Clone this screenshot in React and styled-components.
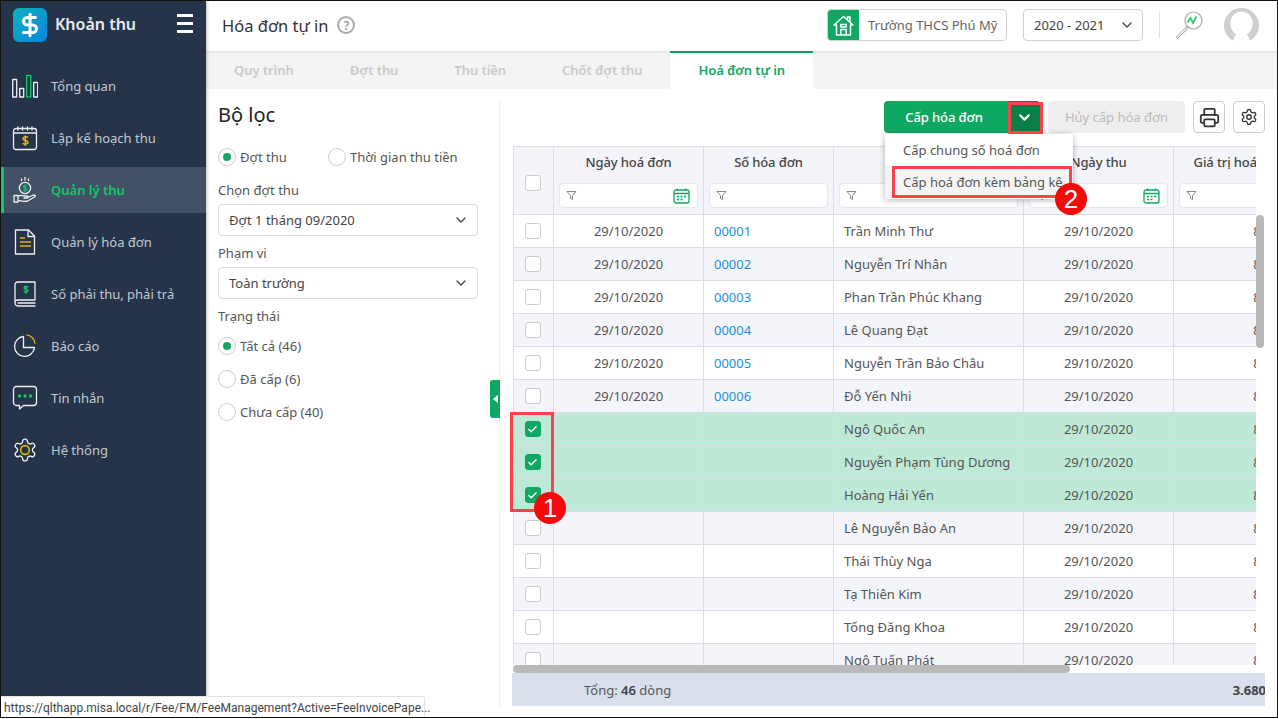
import React from 'react'
import styled, { createGlobalStyle } from 'styled-components'
import { ChevronDown, DollarSign, Printer, Settings, Check } from 'lucide-react'

const GlobalStyle = createGlobalStyle`
html, body {
    margin: 0;
    padding: 0;
    background: #fff;
    overflow: hidden;
}
* { box-sizing: border-box; }
body {
    font-family: "Noto Sans", "Open Sans", sans-serif;
    font-size: 13px;
    color: #555;
}
`

const Frame = styled.div`
position: relative;
display: flex;
width: 1278px;
height: 718px;
border: 1px solid #111;
overflow: hidden;
`

const Sidebar = styled.aside`
width: 205px;
flex: none;
background: #253449;
box-shadow: 1px 0 3px rgba(0,0,0,.25);
z-index: 2;
`
const Brand = styled.div`
display: flex;
align-items: center;
height: 50px;
padding: 0 0 2px 12px;
border-bottom: 1px solid #222f42;
`
const Logo = styled.div`
display: flex;
align-items: center;
justify-content: center;
width: 34px;
height: 34px;
border-radius: 6px;
background: linear-gradient(135deg, #0ab3b8, #0b84e0);
color: #fff;
`
const BrandName = styled.div`
margin: 0 0 2px 8px;
width: 122px;
color: #e8eaee;
font-size: 16px;
font-weight: 600;
`
const Burger = styled.div`
display: flex;
flex-direction: column;
gap: 5px;
width: 16px;
margin-bottom: 2px;
span {
    display: block;
    height: 3px;
    background: #fff;
}
`
const Menu = styled.nav`
display: flex;
flex-direction: column;
gap: 6px;
padding-top: 12px;
`
const MenuItem = styled.div`
display: flex;
align-items: center;
gap: 13px;
height: 46px;
padding-left: 11px;
font-size: 13px;
color: ${p => (p.$active ? '#12c86c' : '#c4c8cf')};
font-weight: ${p => (p.$active ? 600 : 400)};
background: ${p => (p.$active ? '#435166' : 'transparent')};
box-shadow: ${p => (p.$active ? 'inset 3px 0 0 #12c86c' : 'none')};
`

const Main = styled.main`
flex: 1;
min-width: 0;
display: flex;
flex-direction: column;
`
const Header = styled.header`
display: flex;
align-items: center;
height: 50px;
flex: none;
padding: 0 0 2px 16px;
background: #fff;
box-shadow: 0 1px 3px rgba(0,0,0,.1);
z-index: 1;
`
const PageTitle = styled.h1`
margin: 0;
font-size: 16.5px;
font-weight: 400;
color: #333;
`
const HelpMark = styled.div`
display: flex;
align-items: center;
justify-content: center;
width: 18px;
height: 18px;
margin-left: 9px;
border: 2px solid #aaa;
border-radius: 50%;
color: #999;
font-size: 12px;
font-weight: 600;
`
const SchoolBox = styled.div`
display: flex;
align-items: center;
width: 180px;
height: 32px;
margin-left: auto;
border: 1px solid #d0d0d0;
border-radius: 4px;
overflow: hidden;
color: #666;
`
const SchoolIcon = styled.div`
display: flex;
align-items: center;
justify-content: center;
width: 31px;
height: 100%;
margin-right: 9px;
background: #0fa863;
`
const YearBox = styled.div`
display: flex;
align-items: center;
justify-content: space-between;
width: 120px;
height: 32px;
margin-left: 16px;
padding: 0 7px 0 10px;
border: 1px solid #d0d0d0;
border-radius: 4px;
color: #444;
`
const HeaderRule = styled.div`
width: 1px;
height: 26px;
margin-left: 16px;
background: #e2e2e2;
`
const SearchSlot = styled.div`
display: flex;
margin-left: 15px;
`
const Avatar = styled.div`
display: flex;
width: 35px;
height: 35px;
margin: 0 18px 0 21px;
`

const TabBar = styled.div`
display: flex;
height: 38px;
flex: none;
background: #f4f4f4;
`
const Tab = styled.div`
display: flex;
align-items: center;
padding: 0 28px;
font-weight: 600;
font-size: 13px;
letter-spacing: -0.06px;
color: ${p => (p.$active ? '#0fa863' : '#c9c9c9')};
background: ${p => (p.$active ? '#fff' : 'transparent')};
box-shadow: ${p => (p.$active ? 'inset 0 2px 0 #0fa863' : 'none')};
`

const Body = styled.div`
position: relative;
flex: 1;
min-height: 0;
display: flex;
padding: 11px 12px 10px 0;
`
const FilterPanel = styled.section`
position: relative;
width: 294px;
flex: none;
padding: 0 21px 0 12px;
border-right: 1px solid #eee;
`
const FilterTitle = styled.h2`
margin: 0 0 17px;
height: 30px;
line-height: 30px;
font-size: 20px;
font-weight: 400;
color: #222;
`
const RadioRow = styled.div`
display: flex;
height: 20px;
margin-bottom: ${p => p.$gap || 0}px;
`
const RadioLabel = styled.label`
display: flex;
align-items: center;
gap: 4px;
width: ${p => (p.$width ? `${p.$width}px` : 'auto')};
color: #555;
`
const RadioDot = styled.span`
display: flex;
align-items: center;
justify-content: center;
width: 18px;
height: 18px;
border: 1px solid #ccc;
border-radius: 50%;
&::after {
    content: '';
    display: ${p => (p.$on ? 'block' : 'none')};
    width: 8px;
    height: 8px;
    border-radius: 50%;
    background: #0fa863;
}
`
const FieldLabel = styled.div`
height: 18px;
line-height: 18px;
margin-bottom: ${p => p.$gap || 5}px;
color: #555;
`
const SelectBox = styled.div`
display: flex;
align-items: center;
justify-content: space-between;
height: 32px;
margin-bottom: 8px;
padding: 0 8px 0 10px;
border: 1px solid #ddd;
border-radius: 4px;
color: #444;
`
const Collapse = styled.div`
position: absolute;
top: 280px;
right: -1px;
display: flex;
align-items: center;
justify-content: center;
width: 10px;
height: 38px;
background: #0fa863;
border-radius: 3px 0 0 3px;
&::after {
    content: '';
    border: 4px solid transparent;
    border-right: 5px solid #fff;
    border-left: 0;
}
`

const Content = styled.section`
position: relative;
flex: 1;
min-width: 0;
display: flex;
flex-direction: column;
padding-left: 13px;
`
const Toolbar = styled.div`
display: flex;
justify-content: flex-end;
gap: 8px;
height: 32px;
flex: none;
margin: 1px 0 13px;
`
const SplitButton = styled.div`
display: flex;
width: 156px;
border-radius: 4px;
overflow: hidden;
background: #0fa863;
color: #fff;
font-weight: 500;
letter-spacing: -0.1px;
`
const SplitLabel = styled.div`
display: flex;
align-items: center;
justify-content: center;
width: 120px;
margin-right: 4px;
`
const SplitArrow = styled.div`
display: flex;
align-items: center;
justify-content: center;
flex: 1;
background: #0b7f48;
`
const GhostButton = styled.div`
display: flex;
align-items: center;
justify-content: center;
width: 137px;
border-radius: 4px;
background: #eeeeee;
color: #bbb;
`
const IconButton = styled.div`
display: flex;
align-items: center;
justify-content: center;
width: 32px;
border: 1px solid #ccc;
border-radius: 4px;
color: #333;
`

const GridArea = styled.div`
position: relative;
flex: none;
height: 527px;
padding: 0 9px 8px 0;
`
const GridClip = styled.div`
height: 100%;
overflow: hidden;
border-left: 1px solid #dcdce8;
border-top: 1px solid #dcdce8;
`
const Row = styled.div`
display: flex;
width: 800px;
height: ${p => p.$height}px;
background: ${p => (p.$selected ? '#bfe9d7' : p.$odd ? '#f4f5fa' : '#fff')};
`
const Cell = styled.div`
display: flex;
align-items: center;
justify-content: ${p => p.$align || 'flex-start'};
flex: none;
width: ${p => p.$w}px;
padding: ${p => (p.$align === 'center' ? '0' : '0 10px')};
border-right: 1px solid #dcdce8;
border-bottom: 1px solid #dcdce8;
white-space: nowrap;
color: #555;
`
const CheckCell = styled(Cell)`
padding: ${p => (p.$head ? '5px 2px 0 0' : '0 2px 0 0')};
`
const HeadCell = styled.div`
flex: none;
width: ${p => p.$w}px;
padding: 6px 5px 0;
border-right: 1px solid #dcdce8;
border-bottom: 1px solid #dcdce8;
`
const HeadTitle = styled.div`
height: 18px;
line-height: 18px;
margin-bottom: 12px;
text-align: center;
font-weight: 500;
letter-spacing: -0.12px;
white-space: nowrap;
color: #444;
`
const FilterInput = styled.div`
display: flex;
align-items: center;
justify-content: space-between;
height: 25px;
padding: 0 7px 0 6px;
background: #fff;
border: 1px solid #e6e6ee;
border-radius: 4px;
`
const CheckBox = styled.div`
display: flex;
align-items: center;
justify-content: center;
width: 16px;
height: 16px;
border-radius: 3px;
border: 1px solid ${p => (p.$on ? '#0fa863' : '#ccc')};
background: ${p => (p.$on ? '#0fa863' : '#fff')};
color: #fff;
`
const LinkText = styled.span`
color: #1a90e0;
`
const VScroll = styled.div`
position: absolute;
top: 69px;
right: 1px;
width: 8px;
height: 133px;
border-radius: 4px;
background: #b9b9b9;
`
const HScroll = styled.div`
position: absolute;
left: 0;
bottom: 0;
width: 557px;
height: 8px;
border-radius: 4px;
background: #b9b9b9;
`
const TotalBar = styled.div`
display: flex;
align-items: center;
height: 33px;
flex: none;
margin-left: -1px;
padding-left: 72px;
background: #d9e0ec;
overflow: hidden;
white-space: nowrap;
color: #555;
b { font-weight: 600; color: #444; }
`
const TotalAmount = styled.b`
margin-left: auto;
margin-right: -27px;
font-weight: 700 !important;
`

const DropMenu = styled.div`
position: absolute;
top: 34px;
left: 385px;
width: 188px;
padding-bottom: 1px;
background: #fff;
border-radius: 3px;
box-shadow: 0 1px 6px rgba(0,0,0,.3);
z-index: 3;
`
const DropItem = styled.div`
display: flex;
align-items: center;
height: 32px;
padding-left: 18px;
color: #555;
background: ${p => (p.$hover ? '#f5f5f5' : '#fff')};
white-space: nowrap;
`
const RedBox = styled.div`
position: absolute;
left: ${p => p.$x}px;
top: ${p => p.$y}px;
width: ${p => p.$w}px;
height: ${p => p.$h}px;
border: 3px solid #f9434a;
z-index: 4;
pointer-events: none;
`
const Badge = styled.div`
position: absolute;
left: ${p => p.$x}px;
top: ${p => p.$y}px;
display: flex;
align-items: center;
justify-content: center;
width: 32px;
height: 32px;
border-radius: 50%;
background: #f40a0a;
color: #fff;
font-family: "Liberation Sans", sans-serif;
font-size: 26px;
z-index: 5;
`
const StatusLink = styled.div`
position: absolute;
left: 0;
bottom: 0;
width: 424px;
height: 21px;
padding-left: 3px;
line-height: 22px;
background: #fff;
border: 1px solid #e2e2e2;
border-left: 0;
border-bottom: 0;
border-radius: 0 3px 0 0;
font-family: Roboto, sans-serif;
font-size: 12px;
white-space: nowrap;
color: #444;
z-index: 6;
`

const COLS = [40, 150, 130, 190, 150, 131]
const NAMES = [
    'Trần Minh Thư', 'Nguyễn Trí Nhân', 'Phan Trần Phúc Khang', 'Lê Quang Đạt', 'Nguyễn Trần Bảo Châu',
    'Đỗ Yến Nhi', 'Ngô Quốc An', 'Nguyễn Phạm Tùng Dương', 'Hoàng Hải Yến', 'Lê Nguyễn Bảo An',
    'Thái Thùy Nga', 'Tạ Thiên Kim', 'Tống Đăng Khoa', 'Ngô Tuấn Phát',
]
const HEADS = ['Ngày hoá đơn', 'Số hóa đơn', '', 'Ngày thu', 'Giá trị hoá đơn']

const Funnel = () => (
    <svg width="11" height="11" viewBox="0 0 11 11" fill="none" stroke="#888" strokeWidth="1">
        <path d="M1 1.5h9L6.5 5.5v4l-2-1v-3z" />
    </svg>
)
const CalendarMini = () => (
    <svg width="17" height="16" viewBox="0 0 17 16" fill="none" stroke="#0fa863" strokeWidth="1.3">
        <rect x="1" y="2" width="15" height="13" rx="2" />
        <path d="M1 5.5h15M4.5 .5v2M12.5 .5v2" />
        <path d="M4 8.5h2M7.5 8.5h2M11 8.5h2M4 11.5h2M7.5 11.5h2" strokeWidth="1.6" />
    </svg>
)

const stroke = { fill: 'none', stroke: '#eef0f3', strokeWidth: 1.3, strokeLinejoin: 'round', strokeLinecap: 'round' }
const IconChart = () => (
    <svg width="26" height="26" viewBox="0 0 26 26">
        <g {...stroke}>
            <rect x="0.7" y="6.5" width="4" height="17.500" />
            <rect x="7.7" y="15.500" width="4" height="8.500" />
            <rect x="21.7" y="9.500" width="4" height="14.500" />
        </g>
        <rect x="14.7" y="2.500" width="4" height="21.500" fill="none" stroke="#12c86c" strokeWidth="1.3" />
    </svg>
)
const IconPlan = () => (
    <svg width="26" height="26" viewBox="0 -1 26 26">
        <g {...stroke}>
            <rect x="1.5" y="2.5" width="23" height="21" rx="2.5" />
            <path d="M1.5 7h23M6 .8v3.4M10.5 .8v3.4M15.500 .8v3.4M20 .8v3.4" />
        </g>
        <path d="M16 11.500c-1-1-5-1-5 1.200s5 1.300 5 3.600-4.200 2.200-5.300 1M13.300 9.500v10.500" fill="none" stroke="#e8b10c" strokeWidth="1.5" />
    </svg>
)
const IconHand = () => (
    <svg width="26" height="26" viewBox="0 0 26 26">
        <g {...stroke}>
            <circle cx="13" cy="11" r="5.600" />
            <path d="M13 .5v2.500M9.500 2v1.500M16.500 2v1.500" />
            <path d="M2 18.500h4v6.500H2zM6 19.500c2.500-1.500 4-1.500 6-.5h3c1.500 0 1.500 2 0 2h-3M15.500 20.500l6-2.500c1.800-.5 2.500 1 1 2l-6.500 3.800c-3 1.200-7 .2-10-.3" />
        </g>
        <path d="M15 9c-.7-.7-3.800-.7-3.800.8s3.800.9 3.800 2.600-3.200 1.500-4 .7M13 7.500v7.500" fill="none" stroke="#12c86c" strokeWidth="1.2" />
    </svg>
)
const IconDoc = () => (
    <svg width="26" height="26" viewBox="0 0 26 26">
        <path d="M3.500 1h13l6 6v18h-19zM16 1v6.500h6.500" {...stroke} />
        <path d="M8 9h5M8 13h11M8 17h11" stroke="#e8b10c" strokeWidth="1.600" fill="none" />
    </svg>
)
const IconBook = () => (
    <svg width="26" height="26" viewBox="0 0 26 26">
        <path d="M6 1h17v18H6c-3 0-3 2-3 3s1 3 3 3h17M3 22V4c0-2 1-3 3-3M6 22h17" {...stroke} />
        <path d="M16 6c-.8-.8-4-.8-4 .9s4 1 4 2.900-3.300 1.600-4.200.8M14 4.500v8.500" fill="none" stroke="#12c86c" strokeWidth="1.300" />
    </svg>
)
const IconPie = () => (
    <svg width="26" height="26" viewBox="0 0 26 26">
        <path d="M11.500 3.500a10 10 0 1 0 11 11h-11z" {...stroke} />
        <path d="M14.500 1.800a9.500 9.500 0 0 1 8.500 9" fill="none" stroke="#e8b10c" strokeWidth="1.300" />
    </svg>
)
const IconChat = () => (
    <svg width="26" height="26" viewBox="0 0 26 26">
        <path d="M4.500 1.500h17a3 3 0 0 1 3 3v13a3 3 0 0 1-3 3h-10l-4 3.500v-3.500h-3a3 3 0 0 1-3-3v-13a3 3 0 0 1 3-3z" {...stroke} />
        <g fill="#12c86c">
            <circle cx="7.500" cy="11" r="1.700" />
            <circle cx="13" cy="11" r="1.700" />
            <circle cx="18.500" cy="11" r="1.700" />
        </g>
    </svg>
)
const IconGear = () => (
    <svg width="26" height="26" viewBox="0 0 24 24" style={{ overflow: 'visible' }}>
        <path d="M12.220 2h-.44a2 2 0 0 0-2 2v.18a2 2 0 0 1-1 1.730l-.43.25a2 2 0 0 1-2 0l-.15-.08a2 2 0 0 0-2.730.73l-.22.38a2 2 0 0 0 .73 2.730l.15.1a2 2 0 0 1 1 1.720v.51a2 2 0 0 1-1 1.740l-.15.09a2 2 0 0 0-.73 2.730l.22.38a2 2 0 0 0 2.730.73l.15-.08a2 2 0 0 1 2 0l.43.25a2 2 0 0 1 1 1.730V20a2 2 0 0 0 2 2h.44a2 2 0 0 0 2-2v-.18a2 2 0 0 1 1-1.730l.43-.25a2 2 0 0 1 2 0l.15.08a2 2 0 0 0 2.730-.73l.22-.39a2 2 0 0 0-.73-2.730l-.15-.08a2 2 0 0 1-1-1.740v-.5a2 2 0 0 1 1-1.740l.15-.09a2 2 0 0 0 .73-2.730l-.22-.38a2 2 0 0 0-2.730-.73l-.15.08a2 2 0 0 1-2 0l-.43-.25a2 2 0 0 1-1-1.730V4a2 2 0 0 0-2-2z" {...stroke} strokeWidth="1.200" />
        <circle cx="12" cy="12" r="4" fill="none" stroke="#e8b10c" strokeWidth="1.500" />
    </svg>
)
const IconHome = () => (
    <svg width="21" height="21" viewBox="0 0 21 21" fill="none" stroke="#fff" strokeWidth="1.500" strokeLinejoin="round">
        <path d="M1 10 10.500 1.500 20 10h-2.500v10h-14V10z" />
        <path d="M14.500 4.500V2H17v4.800" />
        <path d="M7.800 20v-5.500h5.400V20M7.800 9.500h5.400v2.500H7.800z" />
    </svg>
)
const IconTrend = () => (
    <svg width="28" height="28" viewBox="0 0 28 28" fill="none">
        <circle cx="18.500" cy="9.500" r="8.500" stroke="#aaa" strokeWidth="1.200" />
        <path d="M12.500 15.500 11 17" stroke="#aaa" strokeWidth="1.500" />
        <path d="M11 16.500 2 25.500c-1 1 0 2 1 1.500l9.500-9z" stroke="#999" strokeWidth="1" fill="#fff" />
        <path d="M12.500 11.500 15.500 7l2.500 5 3.500-6.500" stroke="#2ecb7a" strokeWidth="1.800" />
    </svg>
)
const IconAvatar = () => (
    <svg width="35" height="35" viewBox="0 0 36 36">
        <circle cx="18" cy="18" r="18" fill="#cfcfcf" />
        <ellipse cx="18" cy="16" rx="11.500" ry="12.500" fill="#fff" />
        <path d="M9 36c1-6 3-9 5-10h8c2 1 4 4 5 10z" fill="#fff" />
    </svg>
)

const MENU = [
    ['Tổng quan', IconChart],
    ['Lập kế hoạch thu', IconPlan],
    ['Quản lý thu', IconHand, true],
    ['Quản lý hóa đơn', IconDoc],
    ['Số phải thu, phải trả', IconBook],
    ['Báo cáo', IconPie],
    ['Tin nhắn', IconChat],
    ['Hệ thống', IconGear],
]
const TABS = ['Quy trình', 'Đợt thu', 'Thu tiền', 'Chốt đợt thu', 'Hoá đơn tự in']

const App = () => {
    return (
        <Frame>
            <GlobalStyle />
            <Sidebar>
                <Brand>
                    <Logo><DollarSign size={26} strokeWidth={2.8} /></Logo>
                    <BrandName>Khoản thu</BrandName>
                    <Burger><span /><span /><span /></Burger>
                </Brand>
                <Menu>
                    {MENU.map(([label, Icon, active]) => (
                        <MenuItem key={label} $active={active}>
                            <Icon />
                            {label}
                        </MenuItem>
                    ))}
                </Menu>
            </Sidebar>
            <Main>
                <Header>
                    <PageTitle>Hóa đơn tự in</PageTitle>
                    <HelpMark>?</HelpMark>
                    <SchoolBox>
                        <SchoolIcon><IconHome /></SchoolIcon>
                        Trường THCS Phú Mỹ
                    </SchoolBox>
                    <YearBox>
                        2020 - 2021
                        <ChevronDown size={16} color="#445" />
                    </YearBox>
                    <HeaderRule />
                    <SearchSlot><IconTrend /></SearchSlot>
                    <Avatar><IconAvatar /></Avatar>
                </Header>
                <TabBar>
                    {TABS.map((t, i) => <Tab key={t} $active={i === 4}>{t}</Tab>)}
                </TabBar>
                <Body>
                    <FilterPanel>
                        <FilterTitle>Bộ lọc</FilterTitle>
                        <RadioRow $gap={14}>
                            <RadioLabel $width={110}><RadioDot $on />Đợt thu</RadioLabel>
                            <RadioLabel><RadioDot />Thời gian thu tiền</RadioLabel>
                        </RadioRow>
                        <FieldLabel>Chọn đợt thu</FieldLabel>
                        <SelectBox>Đợt 1 tháng 09/2020<ChevronDown size={16} color="#445" /></SelectBox>
                        <FieldLabel>Phạm vi</FieldLabel>
                        <SelectBox>Toàn trường<ChevronDown size={16} color="#445" /></SelectBox>
                        <FieldLabel $gap={11}>Trạng thái</FieldLabel>
                        <RadioRow $gap={13}><RadioLabel><RadioDot $on />Tất cả (46)</RadioLabel></RadioRow>
                        <RadioRow $gap={13}><RadioLabel><RadioDot />Đã cấp (6)</RadioLabel></RadioRow>
                        <RadioRow><RadioLabel><RadioDot />Chưa cấp (40)</RadioLabel></RadioRow>
                        <Collapse />
                    </FilterPanel>
                    <Content>
                        <Toolbar>
                            <SplitButton>
                                <SplitLabel>Cấp hóa đơn</SplitLabel>
                                <SplitArrow><ChevronDown size={17} strokeWidth={3} /></SplitArrow>
                            </SplitButton>
                            <GhostButton>Hủy cấp hóa đơn</GhostButton>
                            <IconButton><Printer size={21} strokeWidth={2} /></IconButton>
                            <IconButton><Settings size={18} strokeWidth={1.8} /></IconButton>
                        </Toolbar>
                        <GridArea>
                            <GridClip>
                                <Row $height={68} $odd>
                                    <CheckCell $w={COLS[0]} $align="center" $head><CheckBox /></CheckCell>
                                    {HEADS.map((h, i) => (
                                        <HeadCell key={i} $w={COLS[i + 1]}>
                                            <HeadTitle>{h || '\u00a0'}</HeadTitle>
                                            <FilterInput>
                                                <Funnel />
                                                {(i === 0 || i === 3) && <CalendarMini />}
                                            </FilterInput>
                                        </HeadCell>
                                    ))}
                                </Row>
                                {NAMES.map((name, i) => {
                                    const selected = i >= 6 && i <= 8
                                    const issued = i < 6
                                    return (
                                        <Row key={name} $height={33} $odd={i % 2 === 1} $selected={selected}>
                                            <CheckCell $w={COLS[0]} $align="center">
                                                <CheckBox $on={selected}>{selected && <Check size={11} strokeWidth={3} />}</CheckBox>
                                            </CheckCell>
                                            <Cell $w={COLS[1]} $align="center">{issued ? '29/10/2020' : ''}</Cell>
                                            <Cell $w={COLS[2]}>{issued && <LinkText>{`0000${i + 1}`}</LinkText>}</Cell>
                                            <Cell $w={COLS[3]}>{name}</Cell>
                                            <Cell $w={COLS[4]} $align="center">29/10/2020</Cell>
                                            <Cell $w={COLS[5]} $align="flex-end">80.000</Cell>
                                        </Row>
                                    )
                                })}
                            </GridClip>
                            <VScroll />
                            <HScroll />
                        </GridArea>
                        <TotalBar>
                            <span>Tổng: <b>46</b> dòng</span>
                            <TotalAmount>3.680.000</TotalAmount>
                        </TotalBar>
                        <DropMenu>
                            <DropItem>Cấp chung số hoá đơn</DropItem>
                            <DropItem $hover>Cấp hoá đơn kèm bảng kê</DropItem>
                        </DropMenu>
                    </Content>
                </Body>
            </Main>
            <RedBox $x={1007} $y={101} $w={35} $h={32} />
            <RedBox $x={891} $y={165} $w={180} $h={32} />
            <RedBox $x={509} $y={411} $w={44} $h={100} />
            <Badge $x={1054} $y={182}>2</Badge>
            <Badge $x={533} $y={491}>1</Badge>
            <StatusLink>https://qlthapp.misa.local/r/Fee/FM/FeeManagement?Active=FeeInvoicePape...</StatusLink>
        </Frame>
    )
}

export default App
